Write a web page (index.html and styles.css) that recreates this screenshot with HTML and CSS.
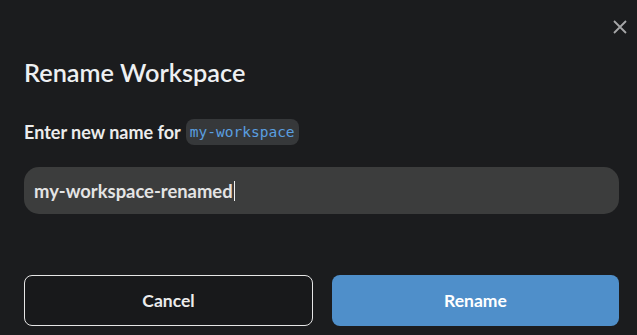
FILE: index.html
```html
<!DOCTYPE html>
<html lang="en">
<head>
  <meta charset="UTF-8">
  <meta name="viewport" content="width=device-width, initial-scale=1.0">
  <title>Rename Workspace</title>
  <link rel="stylesheet" href="styles.css">
</head>
<body>
  <div class="modal">
    <button class="close-btn" aria-label="Close">
      <svg width="14" height="14" viewBox="0 0 14 14">
        <path d="M1 1 L13 13 M13 1 L1 13" stroke="#a6a7a8" stroke-width="1.8" fill="none"/>
      </svg>
    </button>
    <h1>Rename Workspace</h1>
    <label class="field-label" for="new-name">Enter new name for <code class="chip">my-workspace</code></label>
    <div class="input-box">
      <span class="input-text" id="new-name">my-workspace-renamed</span><span class="caret"></span>
    </div>
    <div class="actions">
      <button class="btn cancel-btn">Cancel</button>
      <button class="btn rename-btn">Rename</button>
    </div>
  </div>
</body>
</html>
```

FILE: styles.css
```css
body {
  margin: 0;
  padding: 0;
  background-color: #1b1c1e;
  font-family: Lato, "Open Sans", sans-serif;
  color: #ececec;
  height: 335px;
  overflow: hidden;
}

.modal {
  position: relative;
  padding: 57px 18px 0 24px;
}

.close-btn {
  position: absolute;
  top: 19px;
  right: 9px;
  width: 16px;
  height: 16px;
  padding: 1px;
  border: none;
  background: none;
  cursor: pointer;
}

h1 {
  margin: 0;
  font-size: 25.3px;
  font-weight: 600;
  line-height: 30px;
  color: #eef0f2;
}

.field-label {
  display: flex;
  align-items: center;
  margin-top: 32px;
  font-size: 18px;
  font-weight: 700;
  color: #ececec;
}

.chip {
  margin-left: 5px;
  padding: 5px 4px;
  background-color: #36383a;
  border-radius: 8px;
  font-family: "DejaVu Sans Mono", monospace;
  font-size: 14.5px;
  font-weight: 400;
  color: #5a9fe0;
}

.input-box {
  display: flex;
  align-items: center;
  height: 47px;
  margin-top: 22px;
  padding: 0 10px;
  background-color: #3c3d3d;
  border-radius: 15px;
}

.input-text {
  font-size: 18.4px;
  font-weight: 700;
  color: #e4e4e4;
}

.caret {
  display: inline-block;
  width: 1px;
  height: 20px;
  margin-left: 1px;
  background-color: #f0f0f0;
}

.actions {
  display: flex;
  gap: 19px;
  margin-top: 61px;
}

.btn {
  flex: 1;
  height: 51px;
  border-radius: 8px;
  font-family: Lato, sans-serif;
  font-size: 17.5px;
  font-weight: 700;
  cursor: pointer;
}

.cancel-btn {
  background: #18191b;
  border: 1px solid #e6e6e6;
  color: #ececec;
}

.rename-btn {
  background-color: #4f8fca;
  border: none;
  color: #ffffff;
}
```
